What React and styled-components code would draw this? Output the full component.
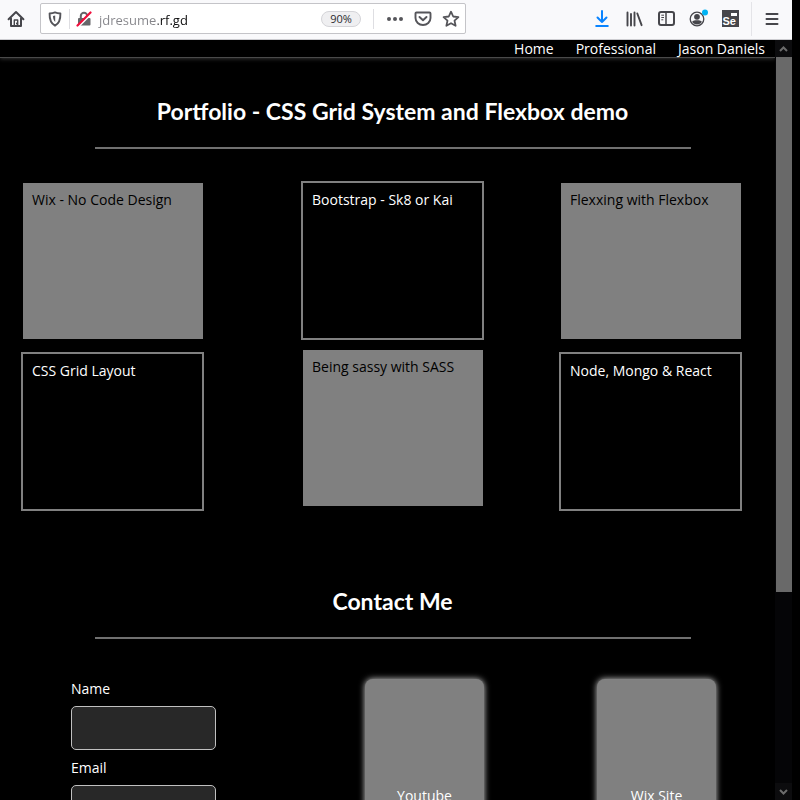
import styled, { createGlobalStyle } from "styled-components";

const projects = [
  [
    { title: "Wix - No Code Design", filled: true },
    { title: "CSS Grid Layout", filled: false },
  ],
  [
    { title: "Bootstrap - Sk8 or Kai", filled: false },
    { title: "Being sassy with SASS", filled: true },
  ],
  [
    { title: "Flexxing with Flexbox", filled: true },
    { title: "Node, Mongo & React", filled: false },
  ],
];

const HomeIcon = () => (
  <svg width="18" height="18" viewBox="0 0 18 18" fill="none" stroke="#46464b" strokeWidth="2" strokeLinejoin="round" strokeLinecap="round">
    <path d="M1.600 9.200 9 2l7.400 7.200" />
    <path d="M4 8.500V16h10V8.500" />
    <path d="M7.300 16v-6h3.400v6" strokeWidth="1.400" />
    <path d="M9.500 13v1" strokeWidth="1" />
  </svg>
);

const ShieldIcon = () => (
  <svg width="14" height="16" viewBox="0 0 14 16" fill="none" stroke="#55555a" strokeWidth="1.900" strokeLinejoin="round">
    <path d="M7 1.400c1.700.7 3.500 1 5.400 1.100C12.600 8.700 11.400 12.300 7 14.700 2.600 12.300 1.400 8.700 1.600 2.500 3.500 2.400 5.300 2.100 7 1.400Z" />
    <path d="M7.200 4.600c-.7.3-1.400.4-2.200.5.1 3 .7 4.600 2.200 5.800Z" fill="#55555a" stroke="none" />
  </svg>
);

const LockIcon = () => (
  <svg width="16" height="16" viewBox="0 0 16 16" fill="none">
    <path d="M4.800 7V5a3.200 3.200 0 0 1 6.400 0v2" stroke="#66666a" strokeWidth="2" />
    <rect x="2" y="7" width="12.500" height="7.500" rx="1" fill="#66666a" />
    <path d="M2.500 15.500 15.500 2.500" stroke="#fff" strokeWidth="2" />
    <path d="M1.500 14.500 14.500 1.500" stroke="#f00f3c" strokeWidth="2.200" strokeLinecap="round" />
  </svg>
);

const DotsIcon = () => (
  <svg width="18" height="6" viewBox="0 0 18 6" fill="#55555a">
    <circle cx="3" cy="3" r="2" />
    <circle cx="9" cy="3" r="2" />
    <circle cx="15" cy="3" r="2" />
  </svg>
);

const PocketIcon = () => (
  <svg width="18" height="16" viewBox="0 0 18 16" fill="none" stroke="#55555a" strokeWidth="1.900" strokeLinejoin="round" strokeLinecap="round">
    <path d="M2.500 1.500h13a1 1 0 0 1 1 1V7a7.500 7 0 0 1-15 0V2.500a1 1 0 0 1 1-1Z" />
    <path d="m5.500 6 3.500 3.300L12.500 6" />
  </svg>
);

const StarIcon = () => (
  <svg width="18" height="18" viewBox="0 0 18 18" fill="none" stroke="#55555a" strokeWidth="1.800" strokeLinejoin="round">
    <path d="m9 1.700 2.200 4.800 5.200.6-3.900 3.500 1.100 5.200L9 13.200l-4.600 2.600 1.100-5.200L1.600 7.100l5.200-.6Z" />
  </svg>
);

const DownloadIcon = () => (
  <svg width="14" height="17" viewBox="0 0 14 17" fill="none" stroke="#0a84ff" strokeWidth="2" strokeLinecap="round" strokeLinejoin="round">
    <path d="M7 1v11M2.500 7.500 7 12l4.500-4.500M1.200 16h11.600" />
  </svg>
);

const LibraryIcon = () => (
  <svg width="17" height="16" viewBox="0 0 17 16" fill="none" stroke="#46464b" strokeWidth="1.900" strokeLinecap="round">
    <path d="M1.500 1.500v13M5 3v11.500M8.500 1.500v13M11.300 2.500l4.300 11.700" />
  </svg>
);

const SidebarIcon = () => (
  <svg width="17" height="15" viewBox="0 0 17 15" fill="none" stroke="#46464b">
    <rect x="1" y="1" width="15" height="13" rx="2" strokeWidth="2" />
    <path d="M8 1.500v12" strokeWidth="1.500" />
    <path d="M3.300 4.200h2.700M3.300 6.500h2.700M3.300 8.800h2" strokeWidth="1" />
  </svg>
);

const AccountIcon = () => (
  <svg width="20" height="20" viewBox="0 0 20 20" fill="none">
    <circle cx="9" cy="10" r="6.800" stroke="#46464b" strokeWidth="1.300" />
    <circle cx="9" cy="7.800" r="2.900" fill="#46464b" />
    <path d="M4.100 12.700c1-1.500 2.800-1.500 4.900-1.500s3.900 0 4.900 1.500a5.700 5.700 0 0 1-9.800 0Z" fill="#46464b" />
    <circle cx="17" cy="3.500" r="3" fill="#00b3f4" />
  </svg>
);

const MenuIcon = () => (
  <svg width="14" height="14" viewBox="0 0 14 14" stroke="#46464b" strokeWidth="2" strokeLinecap="round">
    <path d="M1.500 2h11M1.500 7h11M1.500 12h11" />
  </svg>
);

const Chevron = ({ up }) => (
  <svg width="9" height="6" viewBox="0 0 9 6" fill="none" stroke="#6c6c6c" strokeWidth="2">
    <path d={up ? "M1 5l3.500-3.500L8 5" : "M1 1l3.500 3.500L8 1"} />
  </svg>
);

const App = () => (
  <Browser>
    <GlobalStyle />
    <Toolbar>
      <IconButton aria-label="Home"><HomeIcon /></IconButton>
      <AddressBar>
        <IconButton aria-label="Tracking protection"><ShieldIcon /></IconButton>
        <Separator />
        <IconButton aria-label="Connection not secure"><LockIcon /></IconButton>
        <AddressInput type="text" aria-label="Address" defaultValue="jdresume.rf.gd" />
        <ZoomButton type="button">90%</ZoomButton>
        <Separator />
        <AddressActions>
          <IconButton aria-label="Page actions"><DotsIcon /></IconButton>
          <IconButton aria-label="Save to Pocket"><PocketIcon /></IconButton>
          <IconButton aria-label="Bookmark"><StarIcon /></IconButton>
        </AddressActions>
      </AddressBar>
      <Tools>
        <IconButton aria-label="Downloads"><DownloadIcon /></IconButton>
        <IconButton aria-label="Library"><LibraryIcon /></IconButton>
        <IconButton aria-label="Sidebars"><SidebarIcon /></IconButton>
        <IconButton aria-label="Account"><AccountIcon /></IconButton>
        <IconButton aria-label="Selenium IDE"><Selenium>Se</Selenium></IconButton>
      </Tools>
      <MenuButton aria-label="Menu"><MenuIcon /></MenuButton>
    </Toolbar>
    <Viewport>
      <Page>
        <Nav>
          <NavLink href="#home">Home</NavLink>
          <NavLink href="#professional">Professional</NavLink>
          <NavLink href="#jason">Jason Daniels</NavLink>
        </Nav>
        <Section>
          <Title>Portfolio - CSS Grid System and Flexbox demo</Title>
          <Rule />
          <Projects>
            {projects.map((column) => (
              <ProjectColumn key={column[0].title}>
                {column.map(({ title, filled }) => (
                  <Project key={title} $filled={filled}>{title}</Project>
                ))}
              </ProjectColumn>
            ))}
          </Projects>
        </Section>
        <Section>
          <Title>Contact Me</Title>
          <Rule />
          <Contact>
            <Form>
              <Label htmlFor="name">Name</Label>
              <Input id="name" type="text" />
              <Label htmlFor="email">Email</Label>
              <Input id="email" type="email" />
            </Form>
            <SocialLink href="#youtube">Youtube</SocialLink>
            <SocialLink href="#wix">Wix Site</SocialLink>
          </Contact>
        </Section>
      </Page>
      <Scrollbar>
        <ScrollButton aria-label="Scroll up"><Chevron up /></ScrollButton>
        <Track><Thumb /></Track>
        <ScrollButton aria-label="Scroll down"><Chevron /></ScrollButton>
      </Scrollbar>
    </Viewport>
  </Browser>
);

const GlobalStyle = createGlobalStyle`
  * {
    box-sizing: border-box;
  }
  body {
    margin: 0;
    background-color: black;
    color: white;
    font-family: "Trebuchet MS", "Open Sans", sans-serif;
    font-size: 14px;
    font-weight: 500;
  }
`;
const Browser = styled.div`
display: flex;
flex-direction: column;
height: 100vh;
padding-right: 8px;
overflow: hidden;
`;
const Toolbar = styled.header`
flex: none;
display: flex;
align-items: center;
height: 40px;
padding: 0 0 2px 4px;
background-color: #f9f9fb;
border-bottom: 1px solid #ccccd0;
font-family: "Segoe UI", "Open Sans", sans-serif;
`;
const IconButton = styled.button`
display: flex;
align-items: center;
justify-content: center;
width: 24px;
height: 24px;
padding: 0;
border: none;
background-color: transparent;
`;
const AddressBar = styled.div`
flex: 1;
display: flex;
align-items: center;
max-width: 426px;
height: 31px;
margin-left: 12px;
padding: 0 2px;
border: 1px solid #c4c4c8;
border-radius: 2px;
background-color: white;
`;
const Separator = styled.span`
width: 1px;
height: 20px;
margin: 0 2px;
background-color: #dedee2;
`;
const AddressInput = styled.input`
flex: 1;
min-width: 0;
padding: 2px 0 0 3px;
border: none;
outline: none;
background: linear-gradient(to right, #85858a 62px, #0c0c0d 62px);
background-clip: text;
color: transparent;
font-family: inherit;
font-size: 13px;
font-weight: 400;
line-height: 24px;
`;
const ZoomButton = styled.button`
width: 40px;
height: 16px;
margin-right: 10px;
padding: 0;
border: 1px solid #d4d4d8;
border-radius: 8px;
background-color: #efeff1;
color: #2a2a2e;
font-family: inherit;
font-size: 11px;
line-height: 14px;
`;
const AddressActions = styled.div`
display: flex;
gap: 4px;
margin-left: 7px;
`;
const Tools = styled.div`
display: flex;
gap: 8px;
margin-left: auto;
padding-right: 9px;
`;
const Selenium = styled.span`
display: flex;
align-items: flex-end;
width: 17px;
height: 17px;
padding-left: 1px;
background: linear-gradient(white, white) 9px 3px / 6px 3px no-repeat #46464b;
color: white;
font-size: 11px;
font-weight: 700;
line-height: 11px;
`;
const MenuButton = styled(IconButton)`
width: 41px;
height: 34px;
border-left: 1px solid #e4e4e8;
`;
const Viewport = styled.div`
flex: 1;
display: flex;
min-height: 0;
`;
const Page = styled.main`
flex: 1;
overflow: hidden;
`;
const Nav = styled.nav`
display: flex;
justify-content: flex-end;
gap: 22px;
height: 18px;
padding-right: 10px;
border-bottom: 1px solid #4a4a4a;
box-shadow: 0 1px 4px #333;
`;
const NavLink = styled.a`
color: white;
line-height: 18px;
text-decoration: none;
`;
const Section = styled.section`
height: 490px;
padding: 38px 10px 0 20px;
`;
const Title = styled.h2`
margin: 0;
font-family: "Trebuchet MS", Lato, sans-serif;
font-size: 23px;
font-weight: 700;
line-height: 30px;
text-align: center;
`;
const Rule = styled.hr`
width: 80%;
height: 2px;
margin: 21px auto 32px;
border: none;
background-color: #707070;
`;
const Projects = styled.div`
display: grid;
grid-template-columns: 280fr 258fr 206fr;
padding-left: 1px;
`;
const ProjectColumn = styled.div`
display: grid;
grid-auto-rows: 159px;
gap: 10px;
align-items: start;
&:nth-child(odd) {
  padding-top: 2px;
}
`;
const Project = styled.article`
width: ${p => p.$filled ? "180px" : "183px"};
height: ${p => p.$filled ? "156px" : "159px"};
margin-left: ${p => p.$filled ? "2px" : "0"};
padding: 7px 9px;
border: ${p => p.$filled ? "none" : "2px solid gray"};
background-color: ${p => p.$filled ? "gray" : "black"};
color: ${p => p.$filled ? "black" : "white"};
line-height: 20px;
`;
const Contact = styled.div`
display: grid;
grid-template-columns: 294fr 232fr 168fr;
padding: 8px 0 0 51px;
`;
const Form = styled.form`
display: flex;
flex-direction: column;
align-items: flex-start;
`;
const Label = styled.label`
margin-bottom: 7px;
line-height: 20px;
`;
const Input = styled.input`
width: 145px;
height: 44px;
margin-bottom: 8px;
border: 1px solid #c0c0c0;
border-radius: 5px;
background-color: #282828;
color: white;
`;
const SocialLink = styled.a`
display: flex;
align-items: center;
justify-content: center;
width: 119px;
height: 232px;
border-radius: 8px;
background-color: gray;
box-shadow: 0 0 6px #ccc;
color: white;
text-decoration: none;
`;
const Scrollbar = styled.div`
flex: none;
display: flex;
flex-direction: column;
width: 17px;
background-color: #050507;
`;
const ScrollButton = styled.button`
display: flex;
align-items: center;
justify-content: center;
height: 17px;
padding: 0;
border: none;
background-color: #0c0c0e;
`;
const Track = styled.div`
flex: 1;
padding-left: 1px;
`;
const Thumb = styled.div`
height: 535px;
max-height: 100%;
background-color: #696969;
`;

export default App;
